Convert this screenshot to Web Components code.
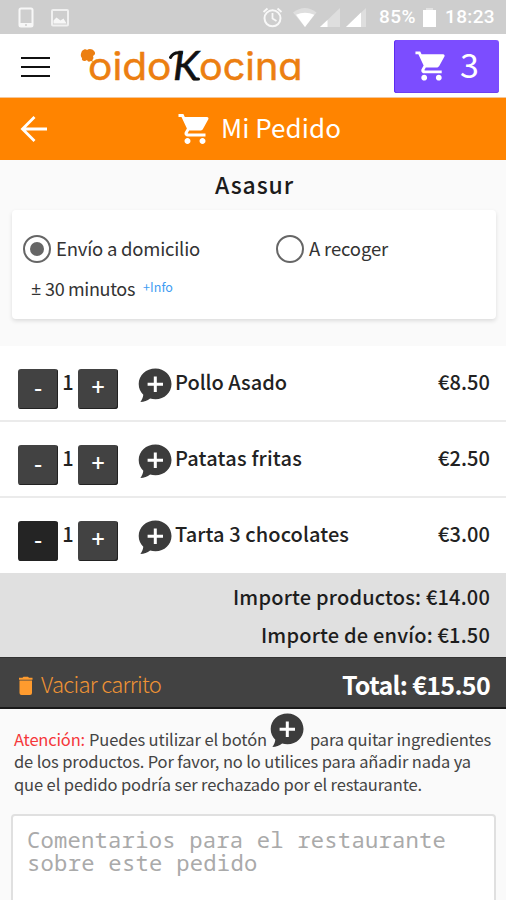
<!DOCTYPE html>
<html lang="es">
<head>
<meta charset="utf-8">
<title>Mi Pedido</title>
<style>
html,body{margin:0;height:900px;overflow:hidden}
body{background:#fafafa;color:#222;font-family:"Noto Sans CJK SC","Open Sans",sans-serif}
</style>
</head>
<body>
<order-app>
  <status-bar></status-bar>
  <app-header></app-header>
  <title-bar><t-x w="120">Mi Pedido</t-x></title-bar>
  <delivery-card></delivery-card>
  <cart-row><t-x w="112">Pollo Asado</t-x><t-x slot="price" w="52">€8.50</t-x></cart-row>
  <cart-row><t-x w="127">Patatas fritas</t-x><t-x slot="price" w="52">€2.50</t-x></cart-row>
  <cart-row active><t-x w="174">Tarta 3 chocolates</t-x><t-x slot="price" w="52">€3.00</t-x></cart-row>
  <cart-summary><t-x w="257">Importe productos: €14.00</t-x><t-x w="229">Importe de envío: €1.50</t-x></cart-summary>
  <cart-total><t-x w="148">Total: €15.50</t-x></cart-total>
  <order-note></order-note>
  <comment-box><t-x w="419">Comentarios para el restaurante</t-x><t-x w="230.5">sobre este pedido</t-x></comment-box>
</order-app>
<script>
const define=(name,html)=>customElements.define(name,class extends HTMLElement{
  constructor(){super();this.attachShadow({mode:'open'}).innerHTML=html;}
});

define('order-app',`<style>:host{display:flex;flex-direction:column;width:506px;height:900px;overflow:hidden}::slotted(*){flex:none}</style><slot></slot>`);

define('cart-icon',`<style>:host{display:block;width:36px;height:36px}svg{display:block;width:100%;height:100%}</style>
<svg viewBox="0 0 24 24" fill="#fff"><path d="M7 18c-1.1 0-1.99.9-1.99 2S5.900 22 7 22s2-.9 2-2-.9-2-2-2zM1 2v2h2l3.600 7.590-1.350 2.450c-.16.280-.25.610-.25.960 0 1.100.9 2 2 2h12v-2H7.420c-.14 0-.25-.11-.25-.25l.03-.12.900-1.630h7.450c.75 0 1.410-.41 1.750-1.030l3.580-6.490A1 1 0 0 0 20 4H5.210l-.94-2H1zm16 16c-1.100 0-1.990.9-1.990 2s.89 2 1.990 2 2-.9 2-2-.9-2-2-2z"/></svg>`);

define('bubble-icon',`<style>:host{display:block;width:34px;height:35px}svg{display:block}</style>
<svg width="34" height="35" viewBox="0 0 34 35"><path d="M17.500.5C8 .5.700 7.300.700 16c0 4.500 1.800 8 4.600 10.700-.3 2.800-1.300 5-2.900 7.300 3.600-.1 7-1.500 9.700-3.500 1.700.5 3.500.8 5.400.8 9 0 16-6.800 16-15.300S26.500.5 17.500.5z" fill="#3c3c3c"/><path d="M17.300 8.500v15.400M9.600 16.200H25" stroke="#fff" stroke-width="3"/></svg>`);

define('status-bar',`<style>
:host{display:flex;align-items:center;box-sizing:border-box;height:34px;background:#cecece;color:#fff;font:500 19px/38px Roboto,sans-serif}
svg{display:block}</style>
<svg width="378" height="34" viewBox="0 0 378 34" fill="none">
<rect x="19.500" y="8.500" width="13" height="18" rx="1.500" stroke="#f7f7f7" stroke-width="2"/><path d="M19 23h14v4H19z" fill="#f7f7f7"/><path d="M25 25h2" stroke="#cecece" stroke-width="1.500"/>
<rect x="52" y="10" width="16" height="15.500" rx="1" stroke="#f0f0f0" stroke-width="2"/><path d="M53.500 23.500v-3l3-3 4 3 3-2 3 5z" fill="#f7f7f7"/>
<circle cx="272.500" cy="18.300" r="8" stroke="#f8f8f8" stroke-width="2"/><path d="M272.500 13v5.500l4 2.500M263.500 12l4-3.500M281.500 12l-4-3.500" stroke="#f8f8f8" stroke-width="1.800"/>
<path d="M293 12.500Q305 3.500 316.500 12.500L305 27z" fill="#dedede"/><path d="M296 14.700Q305 11 314.300 14.700L305 27z" fill="#fff"/>
<path d="M340 8v19h-20z" fill="#dedede"/><path d="M327.500 20v7H320z" fill="#fff"/>
<path d="M366 8v19h-20z" fill="#dedede"/><path d="M361 12.500V27h-15z" fill="#fff"/></svg>
<t-x w="37" style="margin-left:1px">85%</t-x>
<svg width="16" height="34" viewBox="0 0 16 34" style="margin-left:5px"><path d="M5 8h7v2.500H5z" fill="#e2e2e2"/><path d="M2 10h13v17H2z" fill="#fff"/></svg>
<t-x w="50" style="margin-left:8px">18:23</t-x>`);

define('app-header',`<style>
:host{display:flex;align-items:center;box-sizing:border-box;height:64px;background:#fff;padding:0 7px 0 21px;border-bottom:1px solid #f4c79c}
.burger{display:grid;gap:7px;width:29px;margin-top:2px}.burger i{height:2px;background:#111}
.logo{display:block;margin-left:26px}
.cart{display:flex;align-items:center;box-sizing:border-box;width:105px;height:53px;margin-left:auto;margin-top:1px;padding-left:20px;border-radius:3px;background:#7c4dff;box-shadow:inset 1px 0 #5b2bef,inset 0 -1px #6d3ff0;color:#fff;font-size:34px;line-height:50px}
cart-icon{width:35px;height:38px;margin-top:-1px}.cart t-x{margin:-5px 0 0 11px}</style>
<div class="burger"><i></i><i></i><i></i></div>
<svg class="logo" width="232" height="50" viewBox="76 42 232 50">
<g fill="#ec7f11"><path d="M82 52c2-2 4-2 5-1 2-2 6-1 7 1 2 2 1 4-1 5 1 2 0 4-1 4 2 2 1 2-1 1-2 1-3 1-4-1-2 2-6 1-5-2-2-2-1-5 0-7z"/>
<g stroke="#ec7f11" stroke-width=".5" font-family="Inter,sans-serif" font-size="38" style="font-feature-settings:'cv11'"><text x="88" y="81" textLength="83.500" lengthAdjust="spacingAndGlyphs">oido</text><text x="199" y="81" textLength="103.500" lengthAdjust="spacingAndGlyphs">ocina</text></g></g>
<text x="173" y="80.500" font-family="Lato,sans-serif" font-style="italic" font-weight="400" font-size="41" textLength="26" lengthAdjust="spacingAndGlyphs" fill="#111" stroke="#111" stroke-width=".6">K</text>
<path d="M170.500 58.500c2-4 6-5.500 11-4.500M194 80h4.500" stroke="#111" stroke-width="3" fill="none" stroke-linecap="round"/></svg>
<div class="cart"><cart-icon></cart-icon><t-x w="20">3</t-x></div>`);

define('title-bar',`<style>
:host{display:grid;grid-template-columns:177px 36px auto;align-items:center;box-sizing:border-box;height:62px;background:#ff8400;color:#fff;font-size:26px;line-height:60px}
.back{display:block;margin-left:20px}cart-icon{margin-top:-1px}::slotted(t-x){margin:-4px 0 0 8px}</style>
<svg class="back" width="28" height="28" viewBox="0 0 28 28" fill="none" stroke="#fff" stroke-width="2.800"><path d="M27 14H3M14.500 2L2.500 14l12 12"/></svg>
<cart-icon></cart-icon><slot></slot>`);

define('radio-dot',`<style>:host{display:block;box-sizing:border-box;width:28px;height:28px;border:2.500px solid #666;border-radius:50%;padding:5px}
:host([checked])::before{content:"";display:block;width:14px;height:14px;border-radius:50%;background:#666}</style>`);

define('delivery-card',`<style>
:host{display:block;height:186px;box-sizing:border-box}
h1{display:flex;justify-content:center;box-sizing:border-box;margin:0;padding:3px 0 0 3px;height:50px;font-size:23px;font-weight:500;line-height:42px;color:#1c1c1c}
.card{box-sizing:border-box;height:109px;margin:0 10px 0 12px;background:#fff;border-radius:4px;box-shadow:0 2px 4px rgba(0,0,0,.12);padding:25px 11px;font-size:18.500px;line-height:26px;color:#333}
.options{display:grid;grid-template-columns:253px auto}.opt{display:flex;align-items:center;gap:5px}.opt t-x{margin-top:-3px}
.eta{display:flex;margin:12px 0 0 8px;font-size:18px}.eta i{font:18px/27px "Open Sans",sans-serif;width:14px}.eta b{font-weight:400;font-size:12.500px;color:#409cf2;line-height:23px;margin-left:8px}</style>
<h1><t-x w="79">Asasur</t-x></h1>
<div class="card"><div class="options"><div class="opt"><radio-dot checked></radio-dot><t-x w="144">Envío a domicilio</t-x></div><div class="opt"><radio-dot></radio-dot><t-x w="79">A recoger</t-x></div></div>
<div class="eta"><i>±</i><t-x w="90">30 minutos</t-x><b><t-x w="30">+Info</t-x></b></div></div>`);

define('cart-row',`<style>
:host{display:flex;align-items:flex-start;box-sizing:border-box;height:76px;background:#fff;border-bottom:2px solid #ebebeb;padding:23px 16px 0 18px;font-size:20px;font-weight:500;line-height:26px;color:#222}
:host([active]){height:75px;border:0}
.btn{display:flex;justify-content:center;box-sizing:border-box;width:40px;height:40px;border-radius:3px;background:#424242;box-shadow:inset -1px -1px #222;color:#fff;font-size:23px;line-height:34px}
:host([active]) .minus{background:#242424}
.n{width:20px;text-align:center}bubble-icon{margin:-1px 0 0 20px}
.name{padding-left:3px}.price{margin-left:auto}</style>
<div class="btn minus">-</div><div class="n">1</div><div class="btn plus">+</div><bubble-icon></bubble-icon>
<div class="name"><slot></slot></div><div class="price"><slot name="price"></slot></div>`);

define('cart-summary',`<style>:host{display:flex;flex-direction:column;align-items:flex-end;box-sizing:border-box;height:84px;background:#e0e0e0;padding:5px 16px 0 0;font-size:20px;font-weight:500;line-height:38px;color:#1d1d1d}</style><slot></slot>`);

define('cart-total',`<style>:host{display:flex;align-items:flex-start;justify-content:space-between;box-sizing:border-box;height:52px;background:#424242;border-top:1px solid #333;border-bottom:2px solid #191919;padding:0 16px 0 18px;color:#fff;font-size:25px;font-weight:700;line-height:52px}
.clear{display:flex;align-items:center;gap:7px;font-size:22px;font-weight:300;line-height:50px;color:#ef9334}svg{margin-top:5px}</style>
<div class="clear"><svg width="16" height="20" viewBox="0 0 16 20" fill="#ff9b2e"><path d="M1.500 4.500h12.500V17q0 2-2 2h-8.500q-2 0-2-2zM1 1.800h3.500L5.500.800h4.500l1 1H14.500v2H1z"/></svg><t-x w="120">Vaciar carrito</t-x></div><slot></slot>`);

define('order-note',`<style>:host{display:block;box-sizing:border-box;height:105px;padding:1px 14px 0;font-size:16.500px;line-height:22.500px;color:#444}
.first{display:flex;align-items:flex-end;height:40px}.first bubble-icon{margin:0 6px 2px 3px}.red{color:#f5383b}t-x{display:block}</style>
<div class="first"><t-x class="red" w="71">Atención:</t-x><t-x w="178" style="margin-left:4px">Puedes utilizar el botón</t-x><bubble-icon></bubble-icon><t-x w="181">para quitar ingredientes</t-x></div>
<t-x w="457">de los productos. Por favor, no lo utilices para añadir nada ya</t-x><t-x w="408">que el pedido podría ser rechazado por el restaurante.</t-x>`);

define('comment-box',`<style>:host{display:flex;flex-direction:column;box-sizing:border-box;height:120px;margin:0 10px 0 11px;background:#fff;border:2px solid #e0e0e0;border-radius:4px;padding:12px 14px;font-family:"Noto Sans Mono","DejaVu Sans Mono",monospace;font-size:22.200px;line-height:23px;color:#aaa}</style><slot></slot>`);

/* A one-line label tracked so that its advance equals the "w" attribute. */
customElements.define('t-x',class extends HTMLElement{
  constructor(){super();this.attachShadow({mode:'open'}).innerHTML=`<style>:host{display:block;flex:none;white-space:pre}span{display:inline-block}</style><span><slot></slot></span>`;}
  connectedCallback(){
    const w=+this.getAttribute('w'),span=this.shadowRoot.querySelector('span');
    this.style.width=w+'px';
    span.style.letterSpacing=(w-span.getBoundingClientRect().width)/this.textContent.length+'px';
  }
});
</script>
</body>
</html>
